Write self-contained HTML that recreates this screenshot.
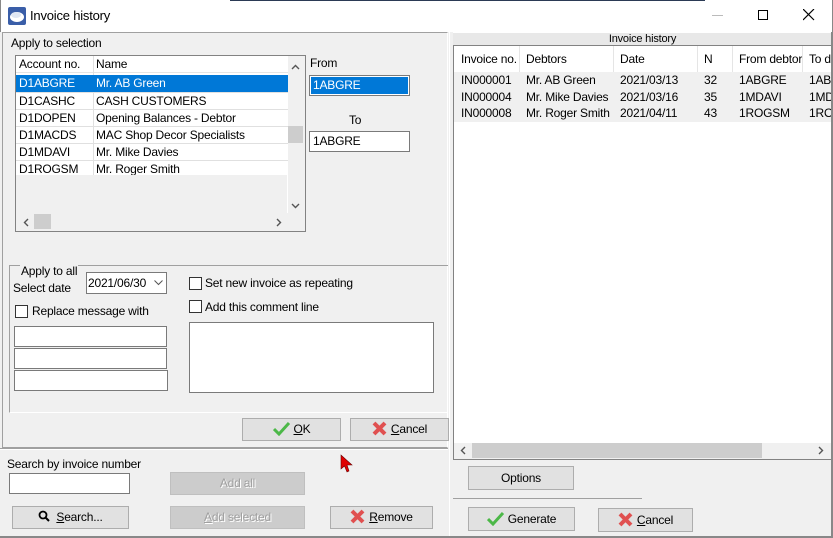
<!DOCTYPE html>
<html><head><style>
*{box-sizing:border-box}
body{margin:0;width:833px;height:538px;overflow:hidden;background:#f0f0f0;font-family:"Liberation Sans",Tahoma,sans-serif;font-size:12px;letter-spacing:-0.2px;color:#000;position:relative}
.a{position:absolute}
.box{position:absolute;background:#fff;border:1px solid #7a7a7a}
.btn{position:absolute;background:#e1e1e1;border:1px solid #adadad;text-align:center;line-height:20px}
.dis{background:#cccccc;border-color:#bfbfbf;color:#a0a0a0;text-shadow:1px 1px #fff}
.cb{position:absolute;width:13px;height:13px;border:1px solid #333;background:#fff}
.row{position:absolute;left:0;height:17px;line-height:17px;white-space:nowrap}
u{text-decoration:underline}
</style></head><body>
<!-- title bar -->
<div class="a" style="left:0;top:0;width:833px;height:32px;background:#fff;border-left:1px solid #888;border-right:1px solid #888"></div>
<div class="a" style="left:230px;top:0;width:475px;height:1px;background:#2b3a55"></div>
<svg class="a" style="left:8px;top:7px" width="18" height="18"><rect x="0" y="0" width="18" height="18" rx="2" fill="#3a5ea8"/><ellipse cx="9" cy="10" rx="7" ry="5" fill="#fff"/><ellipse cx="8" cy="8" rx="5" ry="3" fill="#dfe6f3"/></svg>
<div class="a" style="left:30px;top:8px;font-size:13px;color:#000">Invoice history</div>
<div class="a" style="left:712px;top:15px;width:11px;height:1px;background:#bbb"></div>
<div class="a" style="left:758px;top:10px;width:10px;height:10px;border:1px solid #000"></div>
<svg class="a" style="left:803px;top:9px" width="12" height="12"><path d="M0 0L11 11M11 0L0 11" stroke="#000" stroke-width="1.2"/></svg>

<!-- left panel -->
<div class="a" style="left:2px;top:32px;width:446px;height:416px;border:1px solid #a0a0a0;border-right-color:#fff"></div>
<div class="a" style="left:11px;top:36px">Apply to selection</div>
<div class="box" style="left:15px;top:55px;width:291px;height:177px;border-color:#828282"></div>
<div class="a" style="left:16px;top:56px;width:272px;height:118px;background:#fff">
 <div class="row" style="top:0;width:272px;border-bottom:1px solid #e5e5e5"><span class="a" style="left:3px">Account no.</span><span class="a" style="left:80px">Name</span></div>
 <div class="a" style="left:77px;top:0;width:1px;height:119px;background:#e0e0e0"></div>
 <div class="row" style="top:19px;width:272px;background:#0078d7;color:#fff"><span class="a" style="left:3px">D1ABGRE</span><span class="a" style="left:80px">Mr. AB Green</span></div>
 <div class="row" style="top:36px;width:272px;border-top:1px solid #e0e0e0"><span class="a" style="left:3px">D1CASHC</span><span class="a" style="left:80px">CASH CUSTOMERS</span></div>
 <div class="row" style="top:53px;width:272px;border-top:1px solid #e0e0e0"><span class="a" style="left:3px">D1DOPEN</span><span class="a" style="left:80px">Opening Balances - Debtor</span></div>
 <div class="row" style="top:70px;width:272px;border-top:1px solid #e0e0e0"><span class="a" style="left:3px">D1MACDS</span><span class="a" style="left:80px">MAC Shop Decor Specialists</span></div>
 <div class="row" style="top:87px;width:272px;border-top:1px solid #e0e0e0"><span class="a" style="left:3px">D1MDAVI</span><span class="a" style="left:80px">Mr. Mike Davies</span></div>
 <div class="row" style="top:104px;width:272px;border-top:1px solid #e0e0e0"><span class="a" style="left:3px">D1ROGSM</span><span class="a" style="left:80px">Mr. Roger Smith</span></div>
</div>
<div class="a" style="left:16px;top:175px;width:271px;height:38px;background:#f0f0f0"></div>
<div class="a" style="left:288px;top:56px;width:17px;height:157px;background:#f0f0f0"></div>
<div class="a" style="left:288px;top:126px;width:15px;height:17px;background:#cdcdcd"></div>
<svg class="a" style="left:291px;top:64px" width="9" height="6"><path d="M1 5L4.5 1.5L8 5" fill="none" stroke="#555" stroke-width="1.4"/></svg>
<svg class="a" style="left:291px;top:203px" width="9" height="6"><path d="M1 1L4.5 4.5L8 1" fill="none" stroke="#555" stroke-width="1.4"/></svg>
<div class="a" style="left:16px;top:213px;width:289px;height:18px;background:#f0f0f0"></div>
<div class="a" style="left:34px;top:214px;width:17px;height:15px;background:#cdcdcd"></div>
<svg class="a" style="left:23px;top:218px" width="6" height="9"><path d="M5 1L1.5 4.5L5 8" fill="none" stroke="#555" stroke-width="1.4"/></svg>
<svg class="a" style="left:276px;top:218px" width="6" height="9"><path d="M1 1L4.5 4.5L1 8" fill="none" stroke="#555" stroke-width="1.4"/></svg>

<div class="a" style="left:310px;top:56px">From</div>
<div class="a" style="left:309px;top:75px;width:101px;height:21px;border:1px solid #7a7a7a;background:#fff;padding:1px"><div style="background:#0078d7;color:#fff;height:100%;line-height:17px;padding-left:2px">1ABGRE</div></div>
<div class="a" style="left:349px;top:113px">To</div>
<div class="box" style="left:309px;top:131px;width:101px;height:21px;line-height:19px;padding-left:3px">1ABGRE</div>

<!-- apply to all -->
<div class="a" style="left:9px;top:265px;width:439px;height:148px;border-top:1px solid #a0a0a0;border-left:1px solid #a0a0a0;border-bottom:1px solid #fff"></div>
<div class="a" style="left:20px;top:264px;background:#f0f0f0;padding:0 1px">Apply to all</div>
<div class="a" style="left:13px;top:281px">Select date</div>
<div class="box" style="left:86px;top:272px;width:81px;height:22px;line-height:20px;padding-left:1px">2021/06/30</div>
<svg class="a" style="left:154px;top:280px" width="9" height="6"><path d="M0.5 0.5L4.5 4.5L8.5 0.5" fill="none" stroke="#555"/></svg>
<div class="cb" style="left:15px;top:305px"></div>
<div class="a" style="left:32px;top:304px">Replace message with</div>
<div class="box" style="left:14px;top:326px;width:153px;height:21px"></div>
<div class="box" style="left:14px;top:348px;width:153px;height:21px"></div>
<div class="box" style="left:14px;top:370px;width:154px;height:21px"></div>
<div class="cb" style="left:189px;top:277px"></div>
<div class="a" style="left:205px;top:276px">Set new invoice as repeating</div>
<div class="cb" style="left:189px;top:300px"></div>
<div class="a" style="left:205px;top:300px">Add this comment line</div>
<div class="box" style="left:189px;top:322px;width:245px;height:71px"></div>

<div class="btn" style="left:242px;top:418px;width:99px;height:23px"><svg width="17" height="15" style="vertical-align:-3px;margin-right:4px"><path d="M1 8L6 13L16 2" fill="none" stroke="#4cb848" stroke-width="3"/></svg><u>O</u>K</div>
<div class="btn" style="left:350px;top:418px;width:99px;height:23px"><svg width="15" height="15" style="vertical-align:-3px;margin-right:4px"><path d="M2 2L13 13M13 2L2 13" stroke="#e05050" stroke-width="4"/></svg><u>C</u>ancel</div>

<div class="a" style="left:0;top:448px;width:448px;height:1px;background:#a0a0a0"></div>
<div class="a" style="left:0;top:449px;width:448px;height:1px;background:#fff"></div>
<div class="a" style="left:7px;top:457px">Search by invoice number</div>
<div class="box" style="left:9px;top:473px;width:121px;height:21px"></div>
<div class="btn dis" style="left:170px;top:472px;width:135px;height:23px">Add all</div>
<div class="btn" style="left:12px;top:506px;width:117px;height:23px"><svg width="12" height="12" style="vertical-align:-1px;margin-right:6px"><circle cx="5" cy="5" r="3.5" fill="none" stroke="#000" stroke-width="1.8"/><path d="M7.5 7.5L11 11" stroke="#000" stroke-width="2"/></svg><u>S</u>earch...</div>
<div class="btn dis" style="left:170px;top:506px;width:135px;height:23px"><u>A</u>dd selected</div>
<div class="btn" style="left:330px;top:506px;width:103px;height:23px"><svg width="15" height="15" style="vertical-align:-3px;margin-right:4px"><path d="M2 2L13 13M13 2L2 13" stroke="#e05050" stroke-width="4"/></svg><u>R</u>emove</div>
<svg class="a" style="left:340px;top:454px" width="14" height="20"><path d="M1 1L1 15L4.5 12L7 18L9 17L7 11L12 11Z" fill="#e00000" stroke="#600" stroke-width="0.6"/></svg>

<!-- right panel -->
<div class="a" style="left:449px;top:32px;width:1px;height:506px;background:#fff"></div>
<div class="a" style="left:453px;top:32px;width:379px;height:13px;background:#e8e8e8;border-top:1px solid #fff;font-size:11px;text-align:center;line-height:13px">Invoice history</div>
<div class="box" style="left:453px;top:45px;width:379px;height:415px;border-color:#828282"></div>
<div class="a" style="left:454px;top:46px;width:377px;height:397px;overflow:hidden;background:#fff">
 <div class="a" style="left:0;top:0;width:377px;height:26px;line-height:26px;white-space:nowrap">
  <span class="a" style="left:7px">Invoice no.</span><span class="a" style="left:72px">Debtors</span><span class="a" style="left:166px">Date</span><span class="a" style="left:250px">N</span><span class="a" style="left:285px">From debtor</span><span class="a" style="left:355px">To d</span>
  <div class="a" style="left:65px;top:0;width:1px;height:26px;background:#e5e5e5"></div>
  <div class="a" style="left:159px;top:0;width:1px;height:26px;background:#e5e5e5"></div>
  <div class="a" style="left:243px;top:0;width:1px;height:26px;background:#e5e5e5"></div>
  <div class="a" style="left:278px;top:0;width:1px;height:26px;background:#e5e5e5"></div>
  <div class="a" style="left:348px;top:0;width:1px;height:26px;background:#e5e5e5"></div>
 </div>
 <div class="a" style="left:0;top:26px;width:377px;height:50px;background:#f0f0f0;white-space:nowrap">
  <div class="row" style="top:0;height:16px;line-height:16px"><span class="a" style="left:7px">IN000001</span><span class="a" style="left:72px">Mr. AB Green</span><span class="a" style="left:166px">2021/03/13</span><span class="a" style="left:250px">32</span><span class="a" style="left:285px">1ABGRE</span><span class="a" style="left:355px">1AB</span></div>
  <div class="row" style="top:17px;height:16px;line-height:16px"><span class="a" style="left:7px">IN000004</span><span class="a" style="left:72px">Mr. Mike Davies</span><span class="a" style="left:166px">2021/03/16</span><span class="a" style="left:250px">35</span><span class="a" style="left:285px">1MDAVI</span><span class="a" style="left:355px">1MD</span></div>
  <div class="row" style="top:33px;height:16px;line-height:16px"><span class="a" style="left:7px">IN000008</span><span class="a" style="left:72px">Mr. Roger Smith</span><span class="a" style="left:166px">2021/04/11</span><span class="a" style="left:250px">43</span><span class="a" style="left:285px">1ROGSM</span><span class="a" style="left:355px">1RO</span></div>
 </div>
</div>
<div class="a" style="left:454px;top:443px;width:377px;height:16px;background:#f0f0f0"></div>
<div class="a" style="left:472px;top:443px;width:290px;height:15px;background:#cdcdcd"></div>
<svg class="a" style="left:460px;top:446px" width="6" height="9"><path d="M5 1L1.5 4.5L5 8" fill="none" stroke="#555" stroke-width="1.4"/></svg>
<svg class="a" style="left:818px;top:446px" width="6" height="9"><path d="M1 1L4.5 4.5L1 8" fill="none" stroke="#555" stroke-width="1.4"/></svg>
<div class="btn" style="left:468px;top:466px;width:106px;height:24px;line-height:22px">Options</div>
<div class="a" style="left:453px;top:498px;width:189px;height:1px;background:#a0a0a0"></div>
<div class="btn" style="left:468px;top:507px;width:107px;height:24px;line-height:22px"><svg width="17" height="15" style="vertical-align:-3px;margin-right:4px"><path d="M1 8L6 13L16 2" fill="none" stroke="#4cb848" stroke-width="3"/></svg>Generate</div>
<div class="btn" style="left:598px;top:508px;width:95px;height:24px;line-height:22px"><svg width="15" height="15" style="vertical-align:-3px;margin-right:4px"><path d="M2 2L13 13M13 2L2 13" stroke="#e05050" stroke-width="4"/></svg><u>C</u>ancel</div>
<div class="a" style="left:831px;top:32px;width:2px;height:506px;background:#888"></div>
<div class="a" style="left:0;top:536px;width:833px;height:2px;background:#888"></div>
</body></html>
